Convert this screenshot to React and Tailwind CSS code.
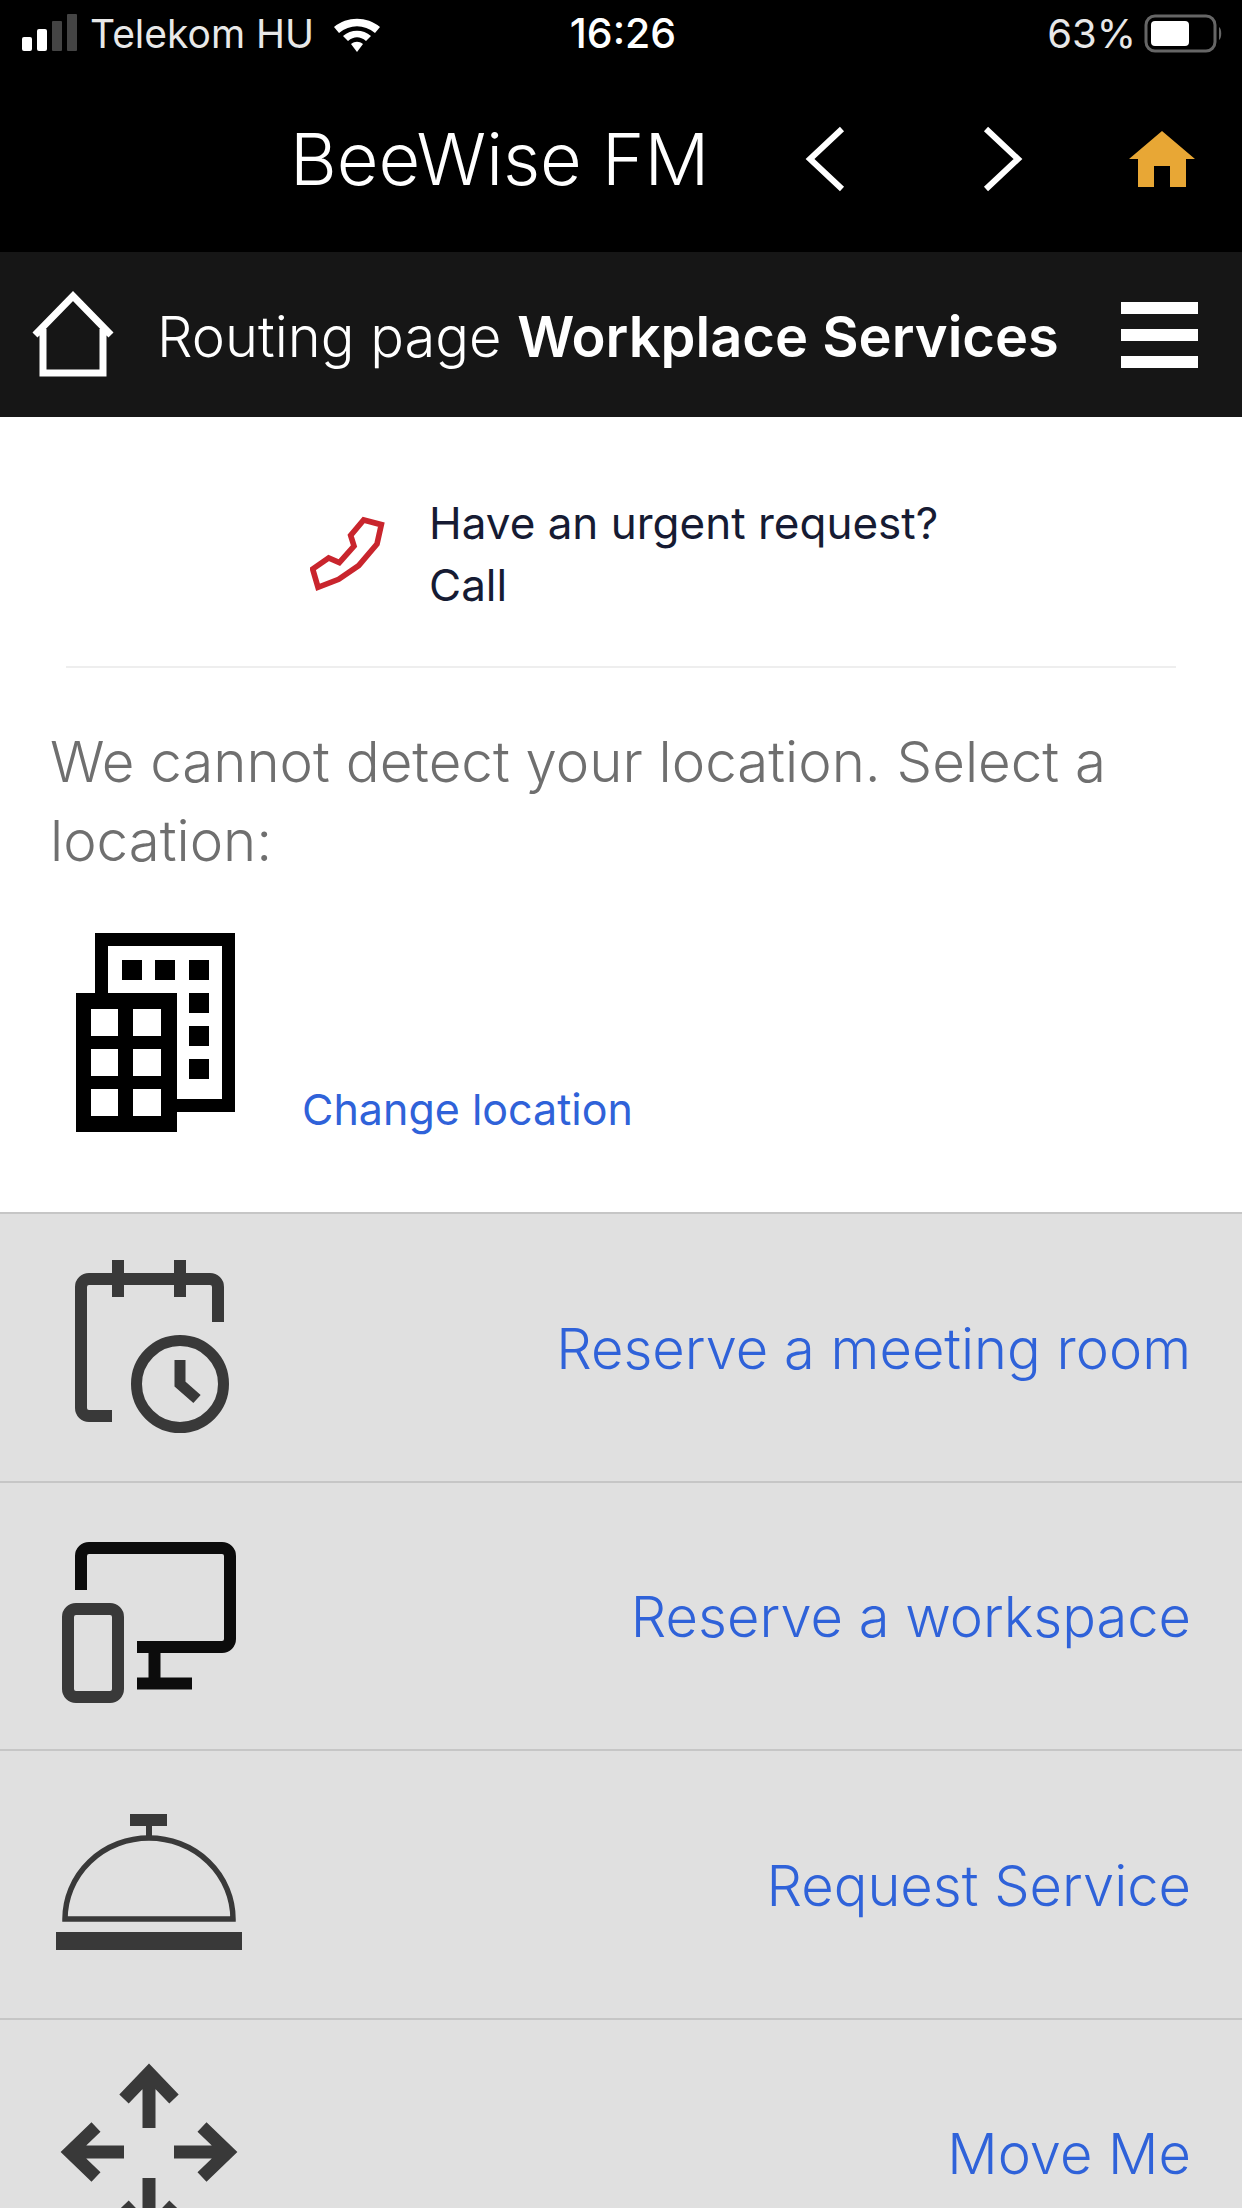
import React from 'react';

const PLEX = "font-['Inter','Noto_Sans',sans-serif]";

const SignalIcon = () => (
  <svg width="62" height="40" viewBox="0 0 62 40">
    <rect x="0" y="23" width="10" height="14" rx="2" fill="#fff" />
    <rect x="15" y="15" width="10" height="22" rx="2" fill="#fff" />
    <rect x="30" y="7" width="10" height="30" rx="1" fill="#444" />
    <rect x="45" y="0" width="10" height="37" rx="1" fill="#444" />
  </svg>
);

const WifiIcon = () => (
  <svg width="50" height="38" viewBox="0 0 50 38">
    <path d="M2 12 C15 1 35 1 48 12 L43 18 C32 9 18 9 7 18 Z" fill="#fff" />
    <path d="M11 21 C19 14 31 14 39 21 L34 26 C28 21 22 21 16 26 Z" fill="#fff" />
    <path d="M19 29 C23 26 27 26 31 29 L25 37 Z" fill="#fff" />
  </svg>
);

const BatteryIcon = () => (
  <svg width="80" height="40" viewBox="0 0 80 40">
    <rect x="2" y="2" width="69" height="35" rx="9" fill="none" stroke="#666" strokeWidth="3" />
    <rect x="7" y="7" width="38" height="25" rx="4" fill="#fff" />
    <path d="M75 13 C78 15 78 24 75 26 Z" fill="#666" />
  </svg>
);

const GoldHome = () => (
  <svg width="66" height="56" viewBox="0 0 66 56">
    <path fillRule="evenodd" d="M33 0 L66 28 H57 V56 H41 V35 H25 V56 H9 V28 H0 Z" fill="#e8a735" />
  </svg>
);

const Chevron = ({ flip }) => (
  <svg width="42" height="66" viewBox="0 0 42 66">
    <path d={flip ? 'M4 3 L36 33 L4 63' : 'M38 3 L6 33 L38 63'} fill="none" stroke="#fff" strokeWidth="6" />
  </svg>
);

const OutlineHome = () => (
  <svg width="84" height="88" viewBox="0 0 84 88">
    <path d="M4 44 L42 5 L80 44 M12 38 V82 H72 V38" fill="none" stroke="#fff" strokeWidth="7" />
  </svg>
);

const PhoneIcon = () => (
  <svg width="80" height="80" viewBox="54 40 240 240">
    <path d="M78 260 L62 205 L110 172 L142 186 L186 136 L176 104 L215 58 L268 72 L255 130 L200 195 L140 236 Z" fill="none" stroke="#c9252d" strokeWidth="17" />
  </svg>
);

const BuildingIcon = () => (
  <svg width="170" height="205" viewBox="0 0 170 205">
    <path d="M31.5 66 V9.5 H158.5 V175.5 H107" fill="none" stroke="#000" strokeWidth="13" />
    <g fill="#000">
      <rect x="52" y="30" width="20" height="20" />
      <rect x="85" y="30" width="20" height="20" />
      <rect x="119" y="30" width="20" height="20" />
      <rect x="119" y="63" width="20" height="20" />
      <rect x="119" y="96" width="20" height="20" />
      <rect x="119" y="129" width="20" height="20" />
    </g>
    <path
      fillRule="evenodd"
      fill="#000"
      d="M6 63 H107 V202 H6 Z M21 79 V106 H48 V79 Z M63 79 V106 H91 V79 Z M21 119 V146 H48 V119 Z M63 119 V146 H91 V119 Z M21 159 V186 H48 V159 Z M63 159 V186 H91 V159 Z"
    />
  </svg>
);

const CalendarIcon = () => (
  <svg width="200" height="200" viewBox="0 0 200 200" fill="none" stroke="#393939" strokeWidth="12">
    <path d="M168 75 V40 a8 8 0 0 0 -8 -8 H39 a8 8 0 0 0 -8 8 V161 a8 8 0 0 0 8 8 H62" />
    <path d="M68 13 V50 M130 13 V50" />
    <circle cx="130" cy="137" r="43.5" strokeWidth="11" />
    <path d="M130 113 V137 L147 152" strokeWidth="11" />
  </svg>
);

const DevicesIcon = () => (
  <svg width="200" height="200" viewBox="0 0 200 200" fill="none" strokeWidth="12">
    <g stroke="#0c0c0c">
      <path d="M31 74 V40 a8 8 0 0 1 8 -8 H172 a8 8 0 0 1 8 8 V123 a8 8 0 0 1 -8 8 H87" />
      <path d="M104.5 131 V167 M87 167.5 H142" />
    </g>
    <rect x="18" y="93" width="50" height="88" rx="8" stroke="#393939" />
  </svg>
);

const BellIcon = () => (
  <svg width="200" height="200" viewBox="0 0 200 200">
    <g fill="#393939">
      <rect x="80" y="30" width="37" height="12" />
      <rect x="96" y="42" width="6" height="12" />
      <rect x="6" y="148" width="186" height="18" />
    </g>
    <path d="M15 135 A84 81 0 0 1 183 135 Z" fill="none" stroke="#393939" strokeWidth="5.5" />
  </svg>
);

const MoveIcon = () => (
  <svg width="200" height="200" viewBox="0 0 200 200" fill="none" stroke="#393939" strokeWidth="13">
    <path d="M99 75 V22 M74 46 L99 20 L124 46" />
    <path d="M99 125 V176 M74 152 L99 178 L124 152" />
    <path d="M74 99 H22 M46 74 L20 99 L46 124" />
    <path d="M124 99 H176 M152 74 L178 99 L152 124" />
  </svg>
);

const rows = [
  { label: 'Reserve a meeting room', icon: <CalendarIcon /> },
  { label: 'Reserve a workspace', icon: <DevicesIcon /> },
  { label: 'Request Service', icon: <BellIcon /> },
  { label: 'Move Me', icon: <MoveIcon /> },
];

export default function App() {
  return (
    <div className={`h-[2208px] w-[1242px] overflow-hidden bg-white ${PLEX}`}>
      {/* barre d'etat + titre */}
      <div className="h-[252px] bg-black text-white">
        <div className="grid h-[66px] grid-cols-[1fr_auto_1fr] items-center pl-[22px] pr-[18px] pt-[2px] text-[39px]">
          <div className="flex items-center">
            <SignalIcon />
            <span className="ml-[6px] text-[#e8e8e8]">Telekom HU</span>
            <span className="ml-[18px]"><WifiIcon /></span>
          </div>
          <span className="text-[41px] font-medium">16:26</span>
          <div className="flex items-center justify-end gap-[8px]">
            <span className="text-[40px] text-[#e8e8e8]">63%</span>
            <BatteryIcon />
          </div>
        </div>
        <div className="flex h-[186px] items-center pl-[290px]">
          <span className="w-[417px] whitespace-nowrap text-[72px] font-light leading-none">BeeWise FM</span>
          <span className="ml-[97px]"><Chevron /></span>
          <span className="ml-[136px]"><Chevron flip /></span>
          <span className="ml-[105px]"><GoldHome /></span>
        </div>
      </div>

      {/* sous-titre */}
      <div className="flex h-[165px] items-center bg-[#161616] pl-[31px] pr-[44px] text-white">
        <OutlineHome />
        <span className="ml-[42px] flex-1 whitespace-nowrap pt-[4px] text-[56px]">
          <span className="font-light">Routing page </span>
          <span className="font-semibold">Workplace Services</span>
        </span>
        <div className="flex w-[77px] flex-col gap-[15px]">
          <div className="h-[12px] bg-white" />
          <div className="h-[12px] bg-white" />
          <div className="h-[12px] bg-white" />
        </div>
      </div>

      {/* bloc localisation */}
      <div className="h-[797px] border-b-2 border-[#c6c6c6]">
        <div className="flex items-center pl-[310px] pt-[75px] text-[#161b33]">
          <PhoneIcon />
          <div className="ml-[39px] text-[44px] leading-[62px]">
            <div>Have an urgent request?</div>
            <div>Call</div>
          </div>
        </div>
        <div className="mx-[66px] mt-[50px] h-[2px] bg-[#eeeeee]" />
        <p className="mt-[54px] px-[50px] text-[56.4px] font-light leading-[79px] text-[#6f6f6f]">
          We cannot detect your location. Select a location:
        </p>
        <div className="mt-[50px] flex items-end pl-[70px]">
          <BuildingIcon />
          <a className="mb-[-4px] ml-[62px] text-[43px] leading-[60px] text-[#2f62d9]">Change location</a>
        </div>
      </div>

      {/* liste des services */}
      {rows.map((row) => (
        <div
          key={row.label}
          className="flex h-[268.5px] items-center justify-between border-b-2 border-[#c6c6c6] bg-[#e0e0e0] pl-[50px] pr-[51px]"
        >
          {row.icon}
          <span className="pt-[3px] text-[56px] font-light text-[#2f62d9]">{row.label}</span>
        </div>
      ))}
    </div>
  );
}
